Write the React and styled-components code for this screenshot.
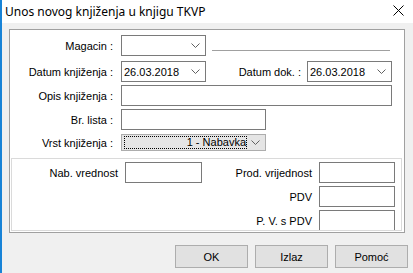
import styled, { createGlobalStyle } from "styled-components";

const Global = createGlobalStyle`
  body {
    margin: 0;
    background: #f0f0f0;
  }
  * {
    box-sizing: border-box;
  }
`;

function Chevron() {
  return (
    <ChevronIcon width="9" height="5" viewBox="0 0 9 5">
      <polyline points="0.5,0.5 4.5,4.5 8.5,0.5" fill="none" stroke="#606060" strokeWidth="1" />
    </ChevronIcon>
  );
}

function Combo({ value, width, height }) {
  return (
    <ComboBox $w={width} $h={height}>
      <ComboValue>{value}</ComboValue>
      <Chevron />
    </ComboBox>
  );
}

export default function App() {
  return (
    <>
      <Global />
      <Window>
        <TitleBar>
          <Title>Unos novog knjiženja u knjigu TKVP</Title>
          <CloseIcon width="11" height="11" viewBox="0 0 11 11">
            <path d="M0.5 0.5 L10.5 10.5 M10.5 0.5 L0.5 10.5" stroke="#000" strokeWidth="1" />
          </CloseIcon>
        </TitleBar>
        <Body>
          <Frame>
            <Fields>
              <Row $h={21} $mt={5}>
                <Label>Magacin :</Label>
                <Combo value="" width={85} height={21} />
                <Line />
              </Row>
              <Row $h={21} $mt={5}>
                <Label>Datum knjiženja :</Label>
                <Combo value="26.03.2018" width={85} height={21} />
                <SideLabel>Datum dok. :</SideLabel>
                <Combo value="26.03.2018" width={85} height={21} />
              </Row>
              <Row $h={21} $mt={3}>
                <Label>Opis knjiženja :</Label>
                <TextBox $w={271} />
              </Row>
              <Row $h={21} $mt={3}>
                <Label>Br. lista :</Label>
                <TextBox $w={145} />
              </Row>
              <Row $h={17} $mt={4}>
                <Label>Vrst knjiženja :</Label>
                <ButtonCombo>
                  <FocusRect>1 - Nabavka</FocusRect>
                  <Chevron />
                </ButtonCombo>
              </Row>
            </Fields>
            <Amounts>
              <AmountLeft>
                <AmountLabel>Nab. vrednost</AmountLabel>
                <TextBox $w={77} />
              </AmountLeft>
              <AmountGrid>
                <GridLabel>Prod. vrijednost</GridLabel>
                <TextBox $w={76} />
                <GridLabel>PDV</GridLabel>
                <TextBox $w={76} />
                <GridLabel>P. V. s PDV</GridLabel>
                <TextBox $w={76} />
              </AmountGrid>
            </Amounts>
          </Frame>
          <Buttons>
            <Button>OK</Button>
            <Button>Izlaz</Button>
            <Button>Pomoć</Button>
          </Buttons>
        </Body>
      </Window>
    </>
  );
}

const Window = styled.div`
  width: 413px;
  height: 273px;
  display: flex;
  flex-direction: column;
  border-left: 2px solid #1883d7;
  background: #f0f0f0;
  font-family: "Liberation Sans", Arial, sans-serif;
  font-size: 11px;
  color: #000;
  overflow: hidden;
`;

const TitleBar = styled.div`
  height: 23px;
  flex: none;
  display: flex;
  align-items: center;
  background: #fff;
  padding: 0 9px 0 3px;
`;

const Title = styled.div`
  flex: 1;
  font-family: "Noto Sans", "Open Sans", sans-serif;
  font-size: 12px;
  color: #000;
  margin-top: -1px;
`;

const CloseIcon = styled.svg`
  display: block;
  margin-top: -3px;
`;

const Body = styled.div`
  flex: 1;
  padding: 6px 0 0 7px;
  display: flex;
  flex-direction: column;
`;

const Frame = styled.div`
  width: 396px;
  height: 204px;
  border: 1px solid #a0a0a0;
  background: #fff;
  display: flex;
  flex-direction: column;
`;

const Fields = styled.div`
  display: flex;
  flex-direction: column;
`;

const Row = styled.div`
  display: flex;
  align-items: center;
  height: ${(p) => p.$h}px;
  margin-top: ${(p) => p.$mt}px;
`;

const Label = styled.div`
  width: 103px;
  margin-right: 8px;
  text-align: right;
  white-space: nowrap;
`;

const SideLabel = styled.div`
  width: 95px;
  margin-right: 6px;
  text-align: right;
  white-space: nowrap;
`;

const Line = styled.div`
  width: 178px;
  margin-left: 6px;
  align-self: flex-end;
  margin-bottom: 5px;
  border-top: 1px solid #a0a0a0;
`;

const ComboBox = styled.div`
  width: ${(p) => p.$w}px;
  height: ${(p) => p.$h}px;
  display: flex;
  align-items: center;
  border: 1px solid #7a7a7a;
  background: #fff;
  padding: 0 5px 0 2px;
`;

const ComboValue = styled.div`
  flex: 1;
  white-space: nowrap;
`;

const ChevronIcon = styled.svg`
  display: block;
  flex: none;
`;

const ButtonCombo = styled.div`
  width: 145px;
  height: 17px;
  display: flex;
  align-items: center;
  border: 1px solid #adadad;
  background: #e5e5e5;
  padding: 1px 5px 1px 2px;
`;

const FocusRect = styled.div`
  flex: 1;
  height: 13px;
  margin-right: 4px;
  border: 1px dotted #000;
  text-align: right;
  line-height: 11px;
  padding-right: 0;
  white-space: nowrap;
`;

const TextBox = styled.div`
  width: ${(p) => p.$w}px;
  height: 21px;
  border: 1px solid #7a7a7a;
  background: #fff;
`;

const Amounts = styled.div`
  flex: 1;
  margin: 7px 2px 1px 1px;
  border: 1px solid #dadada;
  display: flex;
  align-items: flex-start;
  padding: 3px 6px 0 0;
  overflow: hidden;
`;

const AmountLeft = styled.div`
  display: flex;
  align-items: center;
`;

const AmountLabel = styled.div`
  width: 106px;
  margin-right: 7px;
  text-align: right;
  white-space: nowrap;
`;

const AmountGrid = styled.div`
  margin-left: auto;
  display: grid;
  grid-template-columns: auto 76px;
  column-gap: 7px;
  row-gap: 3px;
  align-items: center;
`;

const GridLabel = styled.div`
  text-align: right;
  white-space: nowrap;
`;

const Buttons = styled.div`
  display: flex;
  justify-content: flex-end;
  gap: 7px;
  margin-top: 12px;
  padding-right: 5px;
`;

const Button = styled.div`
  width: 73px;
  height: 23px;
  display: flex;
  align-items: center;
  justify-content: center;
  background: #e1e1e1;
  border: 1px solid #adadad;
`;
